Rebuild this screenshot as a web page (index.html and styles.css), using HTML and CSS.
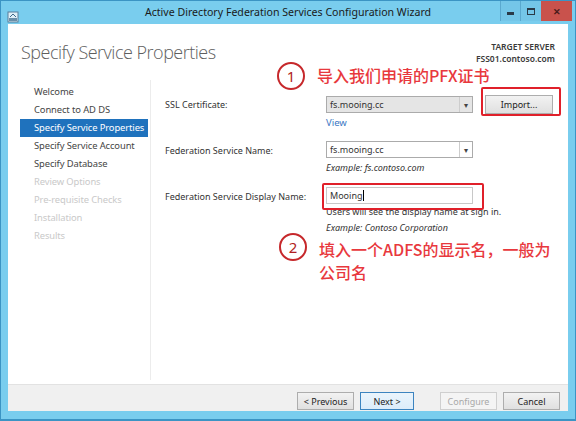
FILE: index.html
```html
<!DOCTYPE html>
<html>
<head>
<meta charset="utf-8">
<link rel="stylesheet" href="styles.css">
</head>
<body>
<div class="window">
  <div class="titlebar">
    <div class="appicon">
      <svg width="12" height="12" viewBox="0 0 12 12"><rect x="1" y="1" width="10" height="10" fill="#dfeff8" stroke="#5a7f99" stroke-width="1"/><rect x="2" y="7" width="8" height="3" fill="#6a8fa9"/><path d="M3 6 L6 3 L9 6" stroke="#3d6a8a" fill="none"/></svg>
    </div>
    <div class="title">Active Directory Federation Services Configuration Wizard</div>
    <div class="caption">
      <div class="cbtn min"><span class="minbar"></span></div>
      <div class="cbtn max"><span class="maxbox"></span></div>
      <div class="cbtn close">✕</div>
    </div>
  </div>
  <div class="client">
    <div class="content">
      <div class="header">
        <h1 class="pagetitle">Specify Service Properties</h1>
        <div class="target">
          <div>TARGET SERVER</div>
          <div>FSS01.contoso.com</div>
        </div>
      </div>
      <div class="main">
        <ul class="nav">
          <li>Welcome</li>
          <li>Connect to AD DS</li>
          <li class="active">Specify Service Properties</li>
          <li>Specify Service Account</li>
          <li>Specify Database</li>
          <li class="off">Review Options</li>
          <li class="off">Pre-requisite Checks</li>
          <li class="off">Installation</li>
          <li class="off">Results</li>
        </ul>
        <div class="form">
          <div class="row r1">
            <div class="label">SSL Certificate:</div>
            <div class="field">
              <div class="line">
                <div class="combo grey"><span>fs.mooing.cc</span><span class="arrow">▾</span></div>
                <div class="btn import">Import...</div>
              </div>
              <div class="link">View</div>
            </div>
          </div>
          <div class="row r2">
            <div class="label">Federation Service Name:</div>
            <div class="field">
              <div class="combo"><span>fs.mooing.cc</span><span class="arrow">▾</span></div>
              <div class="hint"><i>Example: fs.contoso.com</i></div>
            </div>
          </div>
          <div class="row r3">
            <div class="label">Federation Service Display Name:</div>
            <div class="field">
              <div class="textbox">Mooing<span class="caret"></span></div>
              <div class="hint">Users will see the display name at sign in.</div>
              <div class="hint"><i>Example: Contoso Corporation</i></div>
            </div>
          </div>
        </div>
      </div>
    </div>
    <div class="footer">
      <div class="btn">&lt; Previous</div>
      <div class="btn next">Next &gt;</div>
      <div class="btn disabled gap">Configure</div>
      <div class="btn">Cancel</div>
    </div>
  </div>
  <div class="anno box1"></div>
  <div class="anno box2"></div>
  <div class="anno note1"><span class="circle">1</span><span class="ntext">导入我们申请的PFX证书</span></div>
  <div class="anno note2"><span class="circle">2</span><span class="ntext">填入一个ADFS的显示名，一般为<br>公司名</span></div>
</div>
</body>
</html>
```
FILE: styles.css
```css
* { box-sizing: border-box; }
html, body { margin: 0; padding: 0; }
body { width: 576px; height: 421px; overflow: hidden; font-family: "Noto Sans", "Open Sans", sans-serif; }
.window {
  position: relative;
  width: 576px; height: 421px;
  background: #79cdee;
  border: 1px solid #3b94c4;
  border-bottom: 2px solid #3b94c4;
  display: flex; flex-direction: column;
}
.titlebar { height: 23px; display: grid; grid-template-columns: 1fr auto 1fr; align-items: start; }
.appicon { padding: 5px 0 0 6px; }
.title { text-align: center; font-size: 10.6px; color: #1a1a1a; line-height: 23px; white-space: nowrap; }
.caption { display: flex; justify-self: end; margin-right: 3px; }
.cbtn { height: 20px; display: flex; align-items: center; justify-content: center; }
.min { width: 20px; border-left: 1px solid #5aa9cf; background: #74c6e8; }
.max { width: 21px; border-left: 1px solid #5aa9cf; background: #74c6e8; }
.close { width: 31px; background: #c9524c; color: #4a1a1a; font-size: 9px; font-weight: bold; }
.minbar { width: 7px; height: 3px; background: #2a3a48; margin-top: 4px; }
.maxbox { width: 8px; height: 7px; border: 1px solid #2a3a48; border-top-width: 2px; }
.client { flex: 1; margin: 0 7px 8px 7px; background: #fff; display: flex; flex-direction: column; }
.content { flex: 1; display: flex; flex-direction: column; }
.header { height: 56px; display: flex; justify-content: space-between; padding: 15px 13px 0 13px; }
.pagetitle { margin: 0; font-size: 18px; font-weight: 300; color: #5e5e5e; font-family: "Open Sans", "Noto Sans", sans-serif; letter-spacing: -0.5px; line-height: 26px; }
.target { text-align: right; font-size: 8.5px; font-weight: 600; color: #3a3a3a; line-height: 12px; padding-top: 2px; }
.main { flex: 1; display: flex; }
.nav { list-style: none; margin: 0; padding: 3px 0 0 12px; width: 143px; border-right: 1px solid #ececec; margin-bottom: 4px; }
.nav li { height: 18px; line-height: 18px; padding-left: 14px; font-size: 9.4px; color: #454545; white-space: nowrap; letter-spacing: -0.1px; }
.nav li.active { background: #1f72bd; color: #fff; margin-right: 2px; }
.nav li.off { color: #c9c9c9; }
.form { flex: 1; padding: 15px 0 0 14px; font-size: 9px; color: #333; }
.row { display: flex; }
.label { width: 161px; padding-top: 3px; }
.field { flex: 1; }
.line { display: flex; align-items: center; }
.combo { width: 147px; height: 17px; border: 1px solid #ababab; display: flex; align-items: center; justify-content: space-between; padding-left: 3px; background: #fff; }
.combo.grey { background: #e5e5e5; }
.arrow { width: 13px; height: 15px; border-left: 1px solid #cdcdcd; font-size: 8px; text-align: center; line-height: 15px; color: #444; }
.btn.import { margin-left: 12px; width: 68px; height: 19px; }
.link { color: #3b78c4; padding-top: 2px; height: 18px; font-size: 9.5px; }
.r2 { margin-top: 9px; }
.hint { padding-top: 2px; line-height: 12px; }
.r2 .hint { padding-top: 4px; }
.r3 { margin-top: 13px; }
.r3 .hint:first-of-type { padding-top: 3px; }
.r3 .hint + .hint { padding-top: 4px; }
.textbox { width: 147px; height: 17px; border: 1px solid #c8c8c8; padding-left: 3px; line-height: 15px; display: flex; align-items: center; }
.caret { width: 1px; height: 11px; background: #000; margin-left: 1px; }
.footer { height: 27px; background: #f0f0f0; border-top: 1px solid #e2e2e2; display: flex; align-items: flex-end; padding: 0 0 1px 289px; }
.btn { width: 57px; height: 18px; border: 1px solid #adadad; background: linear-gradient(#f2f2f2, #e0e0e0); font-size: 9px; display: flex; align-items: center; justify-content: center; color: #222; margin-right: 6px; }
.btn.next { width: 54px; border-color: #3c84c0; background: linear-gradient(#eaf4fc, #dcecfa); }
.btn.disabled { color: #a8a8a8; background: #f4f4f4; border-color: #cfcfcf; }
.btn.gap { margin-left: 20px; }
.anno { position: absolute; }
.box1 { left: 480px; top: 86px; width: 80px; height: 29px; border: 2px solid #e0202a; border-radius: 2px; }
.box2 { left: 321px; top: 182px; width: 162px; height: 27px; border: 2px solid #e0202a; border-radius: 2px; }
.note1, .note2 { display: flex; align-items: flex-start; font-family: "Noto Sans CJK SC", sans-serif; color: #e8383d; font-size: 16px; font-weight: 500; }
.note1 { left: 276px; top: 61px; }
.note2 { left: 278px; top: 232px; }
.circle { width: 28px; height: 28px; border: 2px solid #c6282b; border-radius: 50%; display: flex; align-items: center; justify-content: center; font-family: "Noto Sans", sans-serif; font-size: 15px; font-weight: 400; color: #b11e22; background: rgba(255,255,255,0.6); }
.ntext { margin-left: 12px; line-height: 21px; padding-top: 3px; }
.note2 .ntext { padding-top: 5px; line-height: 23px; }
```
